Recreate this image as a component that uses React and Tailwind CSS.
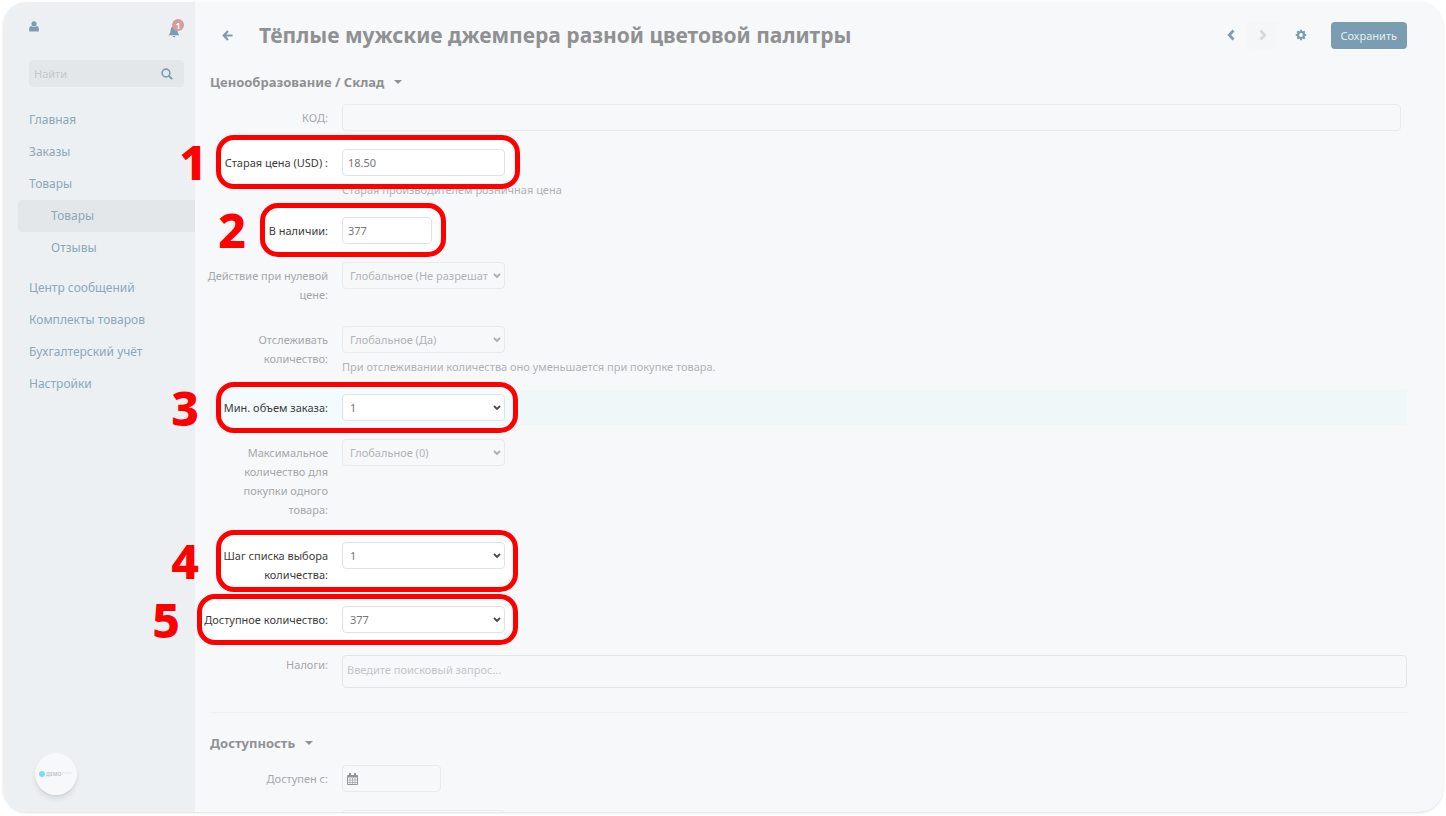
const menu = [
  { title: 'Главная' },
  { title: 'Заказы' },
  { title: 'Товары', items: ['Товары', 'Отзывы'] },
  { title: 'Центр сообщений' },
  { title: 'Комплекты товаров' },
  { title: 'Бухгалтерский учёт' },
  { title: 'Настройки' },
];

function UserIcon() {
  return (
    <svg viewBox="0 0 10 11" className="h-[11px] w-[10px]" fill="currentColor">
      <circle cx="5" cy="2.8" r="2.6" />
      <path d="M0.200 10.500V7.500Q0.200 5.300 2.300 5.100Q5 6.800 7.700 5.100Q9.800 5.300 9.800 7.500v3z" />
    </svg>
  );
}

function BellIcon() {
  return (
    <svg viewBox="0 0 12 13" className="h-[13px] w-3" fill="currentColor">
      <path d="M5.200 1Q6 0 6.800 1Q9.400 2 9.400 5.500Q9.500 8.500 11.500 10.200H0.500Q2.500 8.500 2.600 5.500Q2.600 2 5.200 1z" />
      <path d="M4.500 10.900h3Q7.200 12.300 6 12.300T4.500 10.900z" />
    </svg>
  );
}

function SearchIcon() {
  return (
    <svg viewBox="0 0 12 12" className="h-3 w-3" fill="none" stroke="currentColor" strokeLinecap="round">
      <circle cx="5" cy="5" r="3.9" strokeWidth="1.6" />
      <path d="M8 8l2.600 2.600" strokeWidth="2" />
    </svg>
  );
}

function BackIcon() {
  return (
    <svg viewBox="0 0 11 11" className="h-[11px] w-[11px]" fill="none" stroke="currentColor" strokeWidth="2.200">
      <path d="M6 1L1.700 5.500L6 10M2 5.500h8.500" />
    </svg>
  );
}

function ChevronIcon({ className = '' }) {
  return (
    <svg viewBox="0 0 8 12" className={`h-3 w-2 ${className}`} fill="none" stroke="currentColor" strokeWidth="2.600">
      <path d="M6.500 1.500L2.200 6l4.300 4.500" />
    </svg>
  );
}

function GearIcon() {
  return (
    <svg viewBox="0 0 12 12" className="h-3 w-3" fill="none" stroke="currentColor">
      <circle cx="6" cy="6" r="3" strokeWidth="2.200" />
      <path
        d="M6 0.800v2M6 9.200v2M0.800 6h2M9.200 6h2M2.300 2.300l1.400 1.400M8.300 8.300l1.400 1.400M2.300 9.700l1.400-1.400M8.300 3.700l1.400-1.400"
        strokeWidth="2"
      />
    </svg>
  );
}

function CalendarIcon() {
  return (
    <svg viewBox="0 0 11 12" className="h-3 w-[11px] text-[#939598]" fill="none" stroke="currentColor">
      <path d="M0.500 2.500h10v9h-10z" />
      <path d="M0.500 3.500h10" strokeWidth="2" />
      <path d="M3 0v3M8 0v3" strokeWidth="2" />
      <path d="M3 5v6M5.500 5v6M8 5v6M1 7h9M1 9.500h9" strokeWidth="0.600" />
    </svg>
  );
}

function Sidebar() {
  return (
    <aside className="w-48 shrink-0 bg-[#ecf0f3] text-[#8ba8b8]">
      <div className="flex items-start justify-between pt-[19px] pl-[26px] pr-[15px]">
        <button type="button" aria-label="Профиль" className="text-[#7a9db1]">
          <UserIcon />
        </button>
        <button type="button" aria-label="Уведомления" className="relative mt-1 text-[#7a9db1]">
          <BellIcon />
          <span className="absolute -top-[6px] left-1 flex h-3 w-3 items-center justify-center rounded-full bg-[#d79a9d] text-[9px] font-bold text-white">
            1
          </span>
        </button>
      </div>
      <form className="mt-[22px] mr-[11px] ml-[26px] flex h-[27px] items-center rounded bg-[#e4e7ea] pr-[11px] pl-[5px]">
        <input
          type="search"
          aria-label="Найти"
          placeholder="Найти"
          className="min-w-0 flex-1 bg-transparent text-[11px] outline-none placeholder:text-[#c3c8cc]"
        />
        <button type="button" aria-label="Искать" className="text-[#7a9db1]">
          <SearchIcon />
        </button>
      </form>
      <nav className="mt-[17px] text-xs leading-5">
        {menu.map((section) => (
          <div key={section.title} className={section.items ? 'mb-2' : ''}>
            <a href="#" className="block py-[6px] pl-[26px]">{section.title}</a>
            {section.items?.map((item, i) => (
              <a
                key={item}
                href="#"
                className={`ml-[15px] block rounded-l py-[6px] pl-[33px] ${i === 0 ? 'bg-[#e4e7ea]' : ''}`}
              >
                {item}
              </a>
            ))}
          </div>
        ))}
      </nav>
    </aside>
  );
}

function Header() {
  return (
    <header className="flex items-center pt-[17px] text-[#7a9db1]">
      <button type="button" aria-label="Назад" className="ml-3">
        <BackIcon />
      </button>
      <h1 className="ml-[26px] flex-1 text-[21px] leading-8 font-bold text-[#8f9192]">
        Тёплые мужские джемпера разной цветовой палитры
      </h1>
      <button type="button" aria-label="Предыдущий" className="flex h-[27px] w-8 items-center justify-center">
        <ChevronIcon />
      </button>
      <button
        type="button"
        aria-label="Следующий"
        disabled
        className="flex h-[27px] w-8 items-center justify-center rounded bg-[#f5f6f7] text-[#d6d8da]"
      >
        <ChevronIcon className="rotate-180" />
      </button>
      <button type="button" aria-label="Действия" className="ml-4">
        <GearIcon />
      </button>
      <button type="button" className="ml-6 h-[27px] rounded bg-[#7a9db1] px-[10px] text-[#e6edf1]">
        Сохранить
      </button>
    </header>
  );
}

function SectionTitle({ children }) {
  return (
    <h2 className="text-[13px] leading-5 font-bold text-[#8f9192]">
      <button type="button" className="flex items-center gap-[10px]">
        {children}
        <svg viewBox="0 0 8 4" className="h-1 w-2" fill="currentColor">
          <path d="M0 0h8L4 4z" />
        </svg>
      </button>
    </h2>
  );
}

function Callout({ number, className, gap = 'mr-[22px]' }) {
  return (
    <div className={`absolute -z-10 flex items-center rounded-[18px] border-[5px] border-[#ff0000] ${className}`}>
      <span className={`absolute right-full text-5xl leading-none font-extrabold text-[#ff0000] ${gap}`}>
        {number}
      </span>
    </div>
  );
}

function Row({ id, label, hint, marked, callout, className = 'mb-[18px]', children }) {
  return (
    <div className={`relative isolate flex gap-[14px] ${className}`}>
      {callout}
      <label
        htmlFor={id}
        className={`-ml-2 w-[126px] shrink-0 py-1 text-right ${marked ? 'text-[#3c3c3c]' : 'text-[#a5a7a9]'}`}
      >
        {label}
      </label>
      <div className="min-w-0 flex-1">
        {children}
        {hint && <p className="relative -z-20 mt-1 text-[#b0b3b6]">{hint}</p>}
      </div>
    </div>
  );
}

function TextInput({ marked, className, ...props }) {
  return (
    <input
      type="text"
      className={`block h-[27px] rounded border px-[5px] outline-none ${
        marked ? 'border-[#dfe3e8] bg-white text-[#777777]' : 'border-[#e8eaec] bg-[#f7f8fa] text-[#b0b3b6]'
      } ${className}`}
      {...props}
    />
  );
}

function Select({ id, value, marked }) {
  return (
    <div className="relative w-[163px]">
      <select
        id={id}
        className={`block h-[27px] w-full appearance-none rounded border pr-4 pl-[7px] outline-none ${
          marked ? 'border-[#dfe3e8] bg-white text-[#777777]' : 'border-[#e8eaec] bg-[#f7f8fa] text-[#b0b3b6]'
        }`}
      >
        <option>{value}</option>
      </select>
      <svg
        viewBox="0 0 8 6"
        className={`pointer-events-none absolute top-[11px] right-1 h-[6px] w-2 ${marked ? 'text-[#4a4a4a]' : 'text-[#aaacae]'}`}
      >
        <path d="M1 1l3 3 3-3" fill="none" stroke="currentColor" strokeWidth="1.800" />
      </svg>
    </div>
  );
}

function Pricing() {
  return (
    <section>
      <SectionTitle>Ценообразование / Склад</SectionTitle>
      <div className="mt-3">
        <Row id="code" label="КОД:">
          <div className="pr-[6px]">
            <TextInput id="code" className="w-full" />
          </div>
        </Row>
        <Row
          id="list-price"
          label="Старая цена (USD) :"
          hint="Старая производителем розничная цена"
          marked
          callout={<Callout number={1} gap="mr-[14px]" className="-top-[14px] left-[6px] h-[54px] w-[304px] bg-white" />}
        >
          <TextInput id="list-price" marked defaultValue="18.50" className="w-[163px]" />
        </Row>
        <Row
          id="in-stock"
          label="В наличии:"
          marked
          callout={<Callout number={2} gap="mr-[19px]" className="-top-[14px] left-[50px] h-[54px] w-[186px] bg-white" />}
        >
          <TextInput id="in-stock" marked defaultValue="377" className="w-[90px]" />
        </Row>
        <Row id="zero-price" label="Действие при нулевой цене:">
          <Select id="zero-price" value="Глобальное (Не разрешать добавлять в корзину)" />
        </Row>
        <Row
          id="tracking"
          label="Отслеживать количество:"
          hint="При отслеживании количества оно уменьшается при покупке товара."
        >
          <Select id="tracking" value="Глобальное (Да)" />
        </Row>
        <Row
          id="min-qty"
          label="Мин. объем заказа:"
          marked
          className="-mt-1 mb-[14px] bg-[#f0f7f9] py-1"
          callout={<Callout number={3} className="-top-2 left-[6px] h-[51px] w-[302px] bg-[#f3fbff]" />}
        >
          <Select id="min-qty" value="1" marked />
        </Row>
        <Row
          id="max-qty"
          label="Максимальное количество для покупки одного товара:"
          className="mb-[19px]"
        >
          <Select id="max-qty" value="Глобальное (0)" />
        </Row>
        <Row
          id="qty-step"
          label="Шаг списка выбора количества:"
          marked
          callout={<Callout number={4} className="-top-3 left-[6px] h-[62px] w-[302px] bg-white" />}
        >
          <Select id="qty-step" value="1" marked />
        </Row>
        <Row
          id="available"
          label="Доступное количество:"
          marked
          callout={<Callout number={5} className="-top-3 -left-[13px] h-[51px] w-[321px] bg-white" />}
        >
          <Select id="available" value="377" marked />
        </Row>
        <Row id="taxes" label="Налоги:">
          <input
            id="taxes"
            type="text"
            placeholder="Введите поисковый запрос..."
            className="mt-1 block h-[33px] w-full rounded-sm border border-[#e3e5e7] px-1 pb-1 outline-none placeholder:text-[#c3c6c9]"
          />
        </Row>
      </div>
    </section>
  );
}

function Availability() {
  return (
    <section className="mt-6 border-t border-[#f1f2f3] pt-5">
      <SectionTitle>Доступность</SectionTitle>
      <div className="mt-3">
        <Row id="avail-since" label="Доступен с:">
          <div className="flex h-[27px] w-[99px] items-center rounded border border-[#e8eaec] px-1">
            <CalendarIcon />
            <input id="avail-since" type="text" className="ml-1 min-w-0 flex-1 bg-transparent outline-none" />
          </div>
        </Row>
        <Row id="out-of-stock" label="">
          <Select id="out-of-stock" value="" />
        </Row>
      </div>
    </section>
  );
}

function StoreBadge() {
  return (
    <button
      type="button"
      aria-label="Демо"
      className="absolute bottom-[17px] left-8 flex h-[42px] w-[42px] items-center justify-center rounded-full bg-[#f7f8fa] shadow-md"
    >
      <svg viewBox="0 0 34 8" className="h-2 w-[34px]">
        <circle cx="3" cy="4" r="3" fill="#7fd8f7" />
        <text x="7" y="6" fontSize="5" fontWeight="700" fill="#c4c6c8">ДЕМО</text>
        <path d="M23 3h10" stroke="#dddfe1" strokeDasharray="2 0.500" />
      </svg>
    </button>
  );
}

export default function App() {
  return (
    <div className="h-screen bg-white px-[3px] pt-[2px] pb-1 font-['Noto_Sans','Open_Sans',sans-serif] text-[11px] leading-[19px]">
      <div className="relative flex h-full overflow-hidden rounded-[24px] bg-[#f7f8fa] shadow">
        <Sidebar />
        <main className="min-w-0 flex-1 pr-9 pl-[15px]">
          <Header />
          <div className="pt-[21px]">
            <Pricing />
            <Availability />
          </div>
        </main>
        <StoreBadge />
      </div>
    </div>
  );
}
